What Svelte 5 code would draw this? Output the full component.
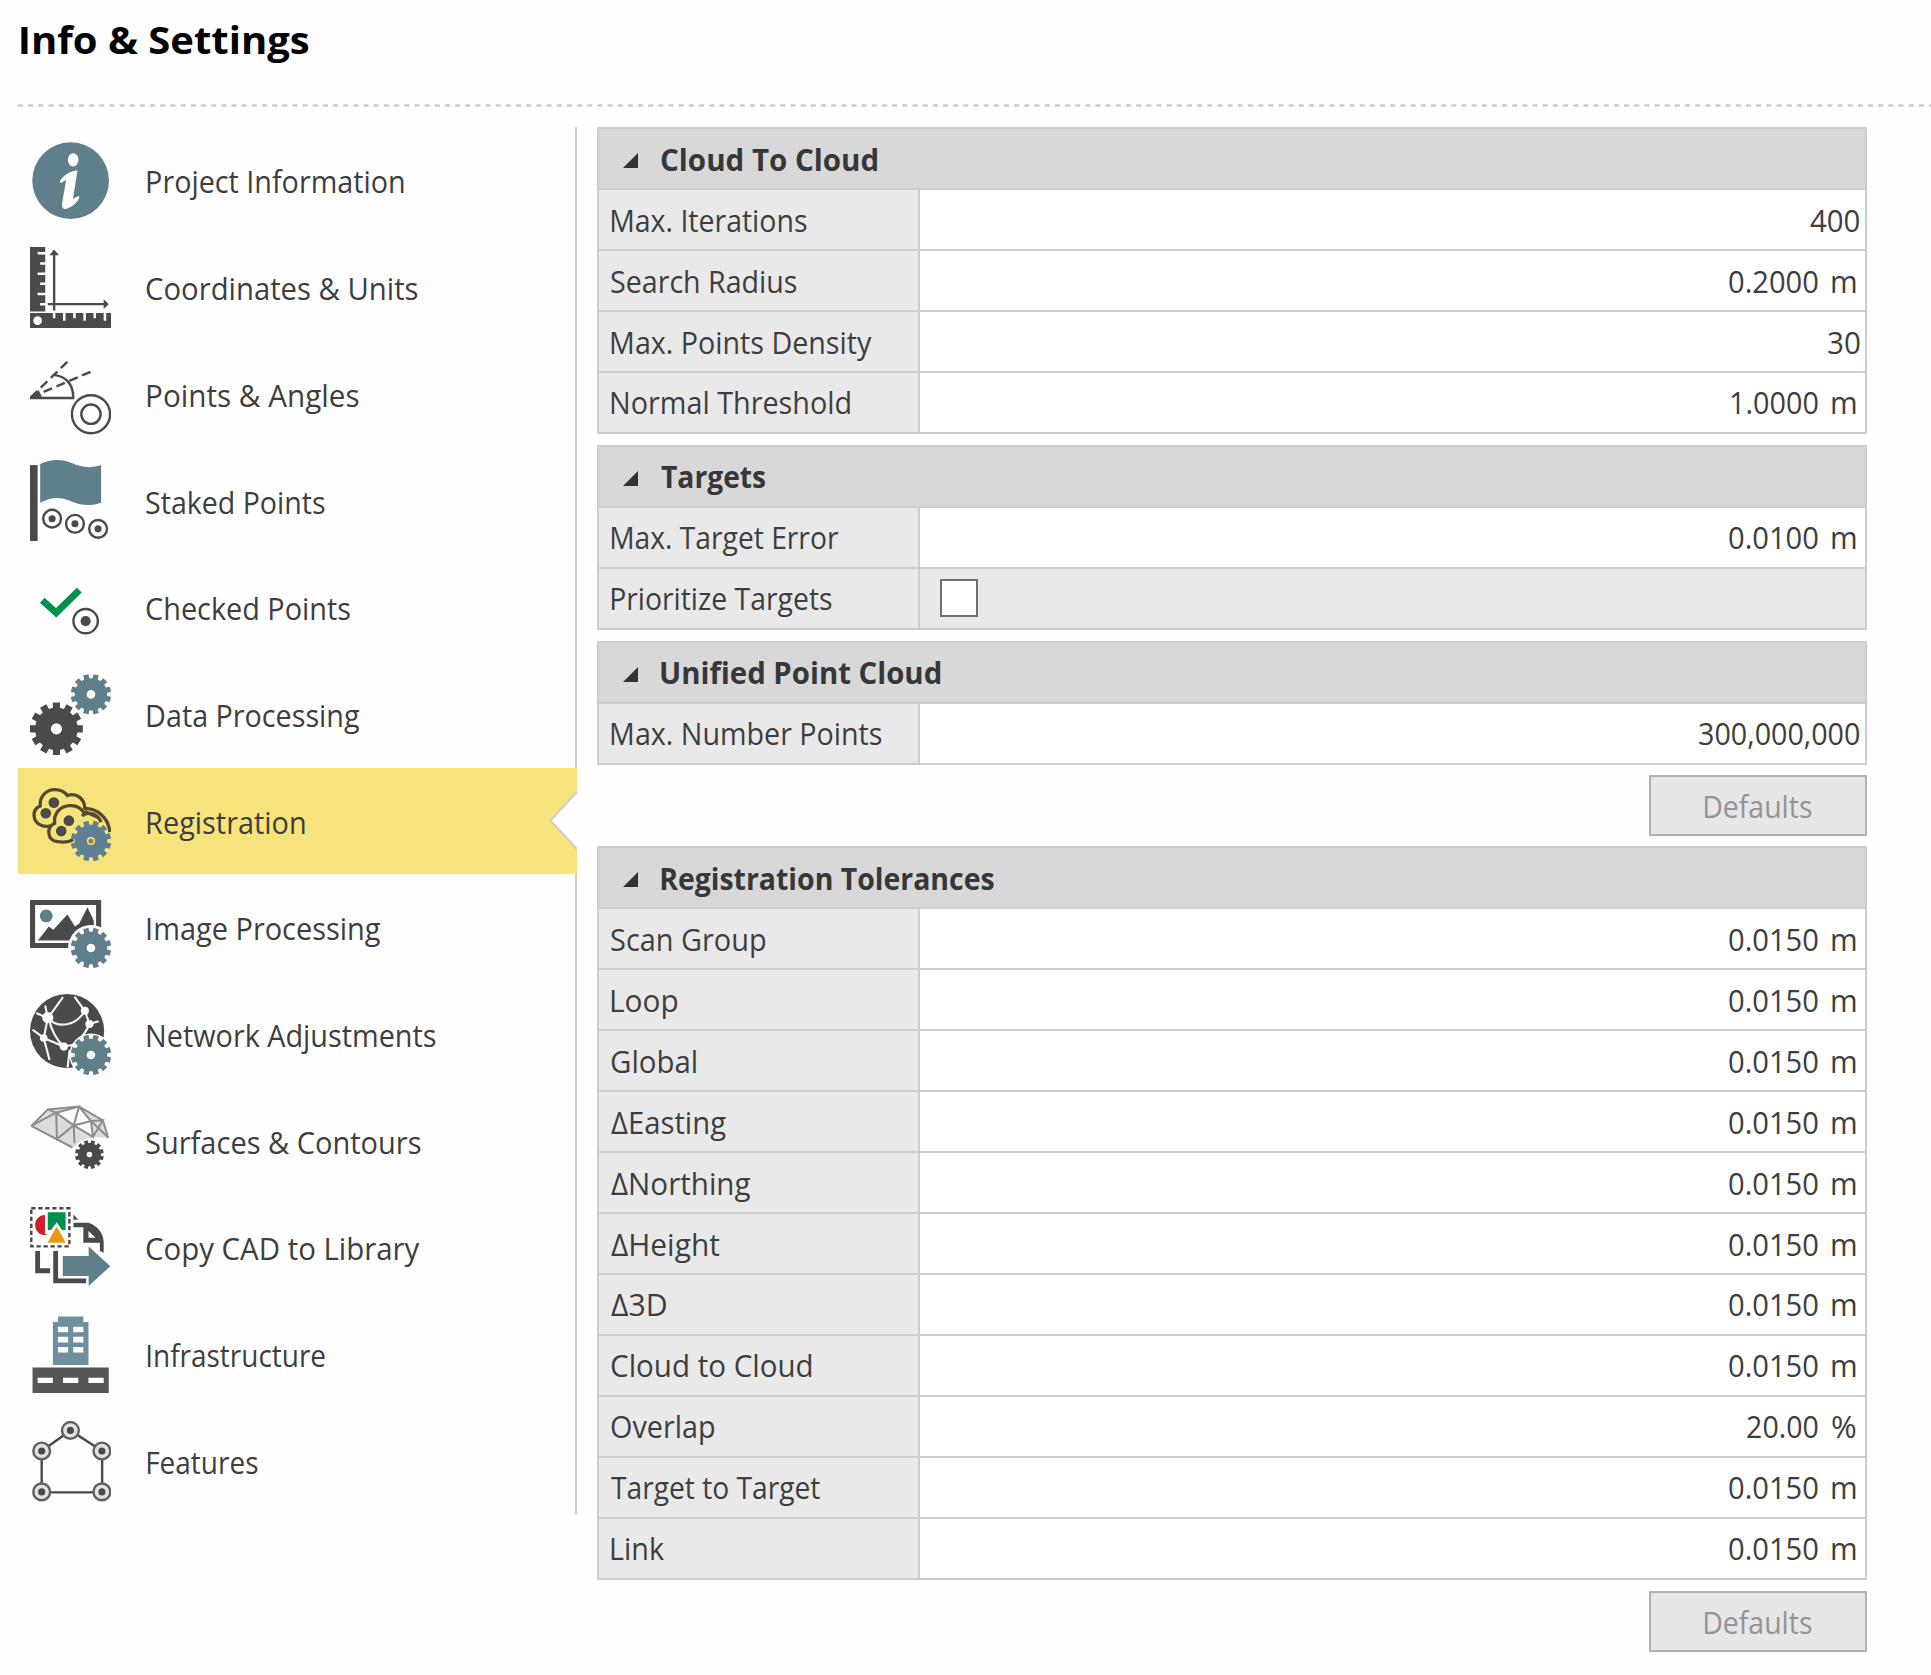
<script>
  const menu = [
    { id: 'info', label: 'Project Information', width: 257 },
    { id: 'units', label: 'Coordinates & Units', width: 272, inset: -1 },
    { id: 'angles', label: 'Points & Angles', width: 212 },
    { id: 'staked', label: 'Staked Points', width: 179, inset: -1 },
    { id: 'checked', label: 'Checked Points', width: 204.5, inset: -1 },
    { id: 'data', label: 'Data Processing', width: 212 },
    { id: 'registration', label: 'Registration', width: 158, active: true },
    { id: 'image', label: 'Image Processing', width: 233 },
    { id: 'network', label: 'Network Adjustments', width: 289 },
    { id: 'surfaces', label: 'Surfaces & Contours', width: 275, inset: -1 },
    { id: 'cad', label: 'Copy CAD to Library', width: 274, inset: -1 },
    { id: 'infra', label: 'Infrastructure', width: 178 },
    { id: 'features', label: 'Features', width: 111 }
  ];

  const meters = (label, width, value = '0.0150') => ({ label, width, value, unit: 'm', valueWidth: 88.5 });

  const groups = [
    {
      title: 'Cloud To Cloud',
      width: 216,
      rows: [
        { label: 'Max. Iterations', width: 196, value: '400', valueWidth: 49 },
        meters('Search Radius', 186, '0.2000'),
        { label: 'Max. Points Density', width: 261, value: '30', valueWidth: 31.5 },
        { ...meters('Normal Threshold', 239.5, '1.0000'), valueWidth: 86.5 }
      ]
    },
    {
      title: 'Targets',
      width: 104,
      rows: [
        meters('Max. Target Error', 227, '0.0100'),
        { label: 'Prioritize Targets', width: 221, checkbox: true }
      ]
    },
    {
      title: 'Unified Point Cloud',
      width: 279,
      rows: [{ label: 'Max. Number Points', width: 271, value: '300,000,000', valueWidth: 160 }],
      defaults: true
    },
    {
      title: 'Registration Tolerances',
      width: 332.5,
      rows: [
        meters('Scan Group', 154),
        meters('Loop', 66),
        meters('Global', 85.5),
        meters('ΔEasting', 114.5),
        meters('ΔNorthing', 139),
        meters('ΔHeight', 109),
        meters('Δ3D', 55.5),
        meters('Cloud to Cloud', 201),
        { label: 'Overlap', width: 103, value: '20.00', unit: '%', valueWidth: 70.5 },
        meters('Target to Target', 209.5),
        meters('Link', 53)
      ],
      defaults: true
    }
  ];

  const context = document.createElement('canvas').getContext('2d');

  // Condenses a text so that its visible strokes span exactly `width` pixels.
  function fit(node, width) {
    const css = getComputedStyle(node);
    context.font = `${css.fontWeight} ${css.fontSize} ${css.fontFamily}`;
    const box = context.measureText(node.textContent);
    const scale = width / (box.actualBoundingBoxLeft + box.actualBoundingBoxRight);
    node.style.width = `${width}px`;
    node.style.transform = `translateX(${box.actualBoundingBoxLeft * scale}px) scaleX(${scale})`;
  }

  // Outline of a twelve-toothed gear with a round hole.
  function gear(cx, cy, r, hole, turn = 0) {
    const points = [];
    for (let i = 0; i < 12; i++) {
      const mid = ((i * 30 + turn) * Math.PI) / 180;
      for (const [offset, radius] of [[-0.165, 0.8], [-0.135, 1], [0.135, 1], [0.165, 0.8]]) {
        const a = mid + offset;
        points.push(`${(cx + Math.sin(a) * r * radius).toFixed(2)} ${(cy - Math.cos(a) * r * radius).toFixed(2)}`);
      }
    }
    return `M${points.join('L')}Z M${cx - hole} ${cy}a${hole} ${hole} 0 1 0 ${2 * hole} 0a${hole} ${hole} 0 1 0 ${-2 * hole} 0Z`;
  }
</script>

{#snippet target(cx, cy, r, dot)}
  <circle class="line" {cx} {cy} {r} />
  <circle class="dark" {cx} {cy} r={dot} />
{/snippet}

{#snippet icon(id)}
  <svg class="icon" viewBox="0 0 32 32" aria-hidden="true">
    {#if id === 'info'}
      <circle class="steel" cx="16" cy="16" r="15.1" />
      <ellipse class="white" cx="17" cy="7.8" rx="2.1" ry="2.6" />
      <path class="white" d="M18.7 11.9C15.8 12.2 13.2 13.7 11.7 16.3L12.2 16.9L14.2 15.7L12.6 25.2C12.4 27 13.5 27.5 14.9 26.9C16.9 26 18.6 24.6 19.5 22.6L19 22L16.9 23.2Z" />
    {:else if id === 'units'}
      <path class="dark" d="M0 0H6V2H3V3H6V6H4V7H6V10H3V11H6V14H4V15H6V18H3V19H6V22H4V23H6V25.4H0Z" />
      <path class="dark" fill-rule="evenodd" d="M0 26H9V28H10V26H13V29H14V26H17V28H18V26H21V29H22V26H25V28H26V26H29V29H30V26H32V32H0Z M1.3 29a1.7 1.7 0 1 0 3.4 0a1.7 1.7 0 1 0 -3.4 0Z" />
      <path class="line" d="M9.5 2.5V25M7 22.5H30" />
      <path class="dark" d="M9.5 1L11.4 3.2H7.6ZM31 22.5L29 20.6V24.4Z" />
    {:else if id === 'angles'}
      <path class="line" d="M0 17.7H17C17.1 15 16.4 12.8 14.7 11C13.2 9.4 11.4 8.9 9.4 8.6" />
      <path class="line" stroke-dasharray="3.6 1.9" d="M0.3 17.5L16 2.2M0.3 17.5L24.8 7" />
      <path class="dark" d="M0 18.1L3.4 14.6L5 17.9Z" />
      <circle class="line" cx="24" cy="24.1" r="7.5" />
      <circle class="line" cx="24" cy="24.1" r="3.8" />
    {:else if id === 'staked'}
      <path class="dark" d="M0 2H3V32H0Z" />
      <path class="steel" d="M4 1.6C8 -.4 12.5 -.5 16.4 1.2C20 2.9 23.8 3.4 28 2V16.8C24 18.1 20.5 18 16.8 16.5C12.5 14.5 8.7 14.2 4 16.8Z" />
      {@render target(8.7, 23.1, 3.5, 1.4)}
      {@render target(17.7, 25.1, 3.5, 1.4)}
      {@render target(26.8, 27.1, 3.5, 1.4)}
    {:else if id === 'checked'}
      <path class="check" d="M4.8 13.1L10.3 18L19.4 9.1" />
      {@render target(21.9, 21.3, 4.8, 2)}
    {:else if id === 'data'}
      <path class="steel" fill-rule="evenodd" d={gear(24, 8, 8, 1.7, 15)} />
      <path class="dark" fill-rule="evenodd" d={gear(10.4, 21.6, 10.5, 2.2)} />
    {:else if id === 'registration'}
      <path class="outline" d="M8 18C4.8 19 1.7 17 1.6 14C1.5 11.8 2.8 10.7 4 10.2C3.8 6.5 6.3 3.8 9.7 3.8C12 3.8 13.7 4.7 14.7 6.1C18.3 4.9 21.5 7.3 21.6 11.2C26.5 11.2 31 15 31.4 20.5" />
      <path class="outline" d="M17 23.5C15 24.7 12.7 24.6 10.8 24.3C6.8 23.8 6.2 18.7 9.7 17C9.3 13 12 10.2 15.7 10.1C18.3 10 20.5 11.3 21.5 13.5C24 12.4 26.7 13.8 28 16.5" />
      <path class="outline" d="M20.5 14.2L22 12.6L26.5 14.6" />
      <circle class="dark" cx="9.4" cy="8.9" r="2.1" />
      <circle class="dark" cx="6.2" cy="13.1" r="2.1" />
      <circle class="dark" cx="15.3" cy="16" r="2.1" />
      <circle class="dark" cx="12.3" cy="20.1" r="2.1" />
      <path class="blue" fill-rule="evenodd" d={gear(24, 24, 8, 1.6, 15)} />
      <circle class="olive" cx="24" cy="24" r="1" />
    {:else if id === 'image'}
      <path class="dark" fill-rule="evenodd" d="M0 5.1H28V24H0ZM2 7.1V22H26V7.1Z" />
      <path class="dark" d="M3.1 21.1L7.4 15.5L9.2 16.8L14.7 10.8L17.7 15.5L19.4 14.4L22.6 8L25.1 13.2V21.1Z" />
      <circle class="steel" cx="6.4" cy="11.4" r="2.5" />
      <circle class="white" cx="24" cy="24" r="9" />
      <path class="steel" fill-rule="evenodd" d={gear(24, 24, 8, 1.7, 15)} />
    {:else if id === 'network'}
      <circle class="dark" cx="14.6" cy="14.6" r="14.6" />
      <path class="web" d="M7 9.5L13 1.2M7 9.5L6 4.5M7 9.5L2.5 7.5M7 9.5C11 13.6 18 12.8 21.6 6.6M7 9.5L5.4 17.3M7.5 10C8.5 14.5 10.5 18 13.3 20.7M21.6 6.6L17.5 1M21.6 6.6L23.4 11.8M23.4 11.8L27 10.7M23.4 11.8C22.5 14 21 16.5 18.6 18.6M5.4 17.3L1 14M5.4 17.3L13.3 20.7L17 20M5.4 17.3L7.7 26M13.3 20.7M15.6 22L14.8 29" />
      <circle class="white" cx="7" cy="9.3" r="2.2" />
      <circle class="white" cx="21.6" cy="6.6" r="1.6" />
      <circle class="white" cx="23.4" cy="11.8" r="1.6" />
      <circle class="white" cx="13.3" cy="20.7" r="1.6" />
      <circle class="white" cx="5.4" cy="17.3" r="1.5" />
      <circle class="white" cx="24" cy="24" r="8.5" />
      <path class="steel" fill-rule="evenodd" d={gear(24, 24, 8, 1.7, 15)} />
    {:else if id === 'surfaces'}
      <path class="mesh" d="M0.5 10.2L7 3.7L19.3 2.6L28.7 8L30.8 15L25 14.6L16.7 18.7L10.4 15.4Z" />
      <path class="facet" d="M11 5.2L19 2.9L17.2 10ZM19.3 3L23.5 8L17.2 10ZM17.2 10L24.4 8.4L24.6 14Z" />
      <path class="edge" d="M0.5 10.2L7 3.7L19.3 2.6L28.7 8L30.8 15M0.5 10.2L16.7 18.7M0.5 10.2L10.3 5L10.6 15.4L17.2 10L10.3 5L19.3 2.6L17.2 10L17.5 17M17.2 10L24 8.3L19.3 2.6M17.2 10L24.8 14.5L24 8.3L30.5 14.5M24.8 14.5L28.7 8L24 8.3M7 3.7L10.3 5" />
      <circle class="white" cx="23.4" cy="21.5" r="6.3" />
      <path class="dark" fill-rule="evenodd" d={gear(23.4, 21.5, 5.7, 1.1, 15)} />
    {:else if id === 'cad'}
      <rect class="line" x="0.5" y="0.5" width="15" height="15" stroke-dasharray="1.7 1.05" />
      <path class="red" d="M5.9 3.1V10.5L7 10.7C4.5 11.8 2 9.8 2 7.1C2 4.8 3.6 3.2 5.9 3.1Z" />
      <path class="green" d="M7 2.1H14V9.1H12.6L10.5 6L8.3 9.1H7Z" />
      <path class="orange" d="M10.5 7.7L14.1 14.1H6.9Z" />
      <path class="thick" d="M3 17.3V25.1H7.9M10.1 17.3V29.1H22.1" />
      <path class="dark" d="M17.1 3L19 5H17.1ZM17.1 6.2H23C26.5 7.4 28.9 10.3 29 13.7V18L27.5 17.3V14.1H21V8H17.1ZM23 9.4V12.1H25.8Z" fill-rule="evenodd" />
      <path class="steel" d="M12.9 19.3H23.1V15.5L31.6 23.3L23.1 31.1V27.2H12.9Z" />
    {:else if id === 'infra'}
      <path class="building" fill-rule="evenodd" d="M11 1H21V3.1H23V20.1H9V3.1H11ZM11 5V7.2H15V5ZM17 5V7.2H21V5ZM11 9V11.2H15V9ZM17 9V11.2H21V9ZM11 13V15.2H15V13ZM17 13V15.2H21V13Z" />
      <path class="road" fill-rule="evenodd" d="M1 21.1H31V31.1H1ZM3 25.1V27.2H9V25.1ZM13 25.1V27.2H19V25.1ZM23 25.1V27.2H29V25.1Z" />
    {:else}
      <path class="line" d="M4.6 12.2L15.9 4.1L28.4 12.2V28.5H4.6Z" />
      {#each [[15.9, 4.1], [4.6, 12.2], [28.3, 12.2], [4.6, 28.3], [28.3, 28.3]] as [cx, cy]}
        <circle class="node" {cx} {cy} r="3.3" />
        <circle class="dark" {cx} {cy} r="1.4" />
      {/each}
    {/if}
  </svg>
{/snippet}

<main>
  <h1><span class="fit" use:fit={288}>Info &amp; Settings</span></h1>
  <svg class="rule" aria-hidden="true"><line x1="0" y1="1.5" x2="100%" y2="1.5" /></svg>

  <div class="body">
    <nav>
      {#each menu as item}
        <a class:active={item.active} href="#{item.id}">
          {@render icon(item.id)}
          <span class="fit" style:margin-left="{item.inset ?? 0}px" use:fit={item.width}>{item.label}</span>
          {#if item.active}
            <svg class="notch" viewBox="0 0 28 58" aria-hidden="true"><path d="M28 0L1.5 28.5L28 57" /></svg>
          {/if}
        </a>
      {/each}
    </nav>

    <div class="panels">
      {#each groups as group}
        <section>
          <h2>
            <svg class="arrow" viewBox="0 0 15 15" aria-hidden="true"><path d="M15 0V15H0Z" /></svg>
            <span class="fit" use:fit={group.width}>{group.title}</span>
          </h2>
          {#each group.rows as row}
            <div class="row">
              <div class="label"><span class="fit" use:fit={row.width}>{row.label}</span></div>
              {#if row.checkbox}
                <div class="value toggle"><input type="checkbox" aria-label={row.label} /></div>
              {:else}
                <div class="value">
                  <span class="fit" use:fit={row.valueWidth}>{row.value}</span>
                  {#if row.unit}<span class="fit unit" use:fit={23.5}>{row.unit}</span>{/if}
                </div>
              {/if}
            </div>
          {/each}
        </section>
        {#if group.defaults}
          <button disabled><span class="fit" use:fit={108}>Defaults</span></button>
        {/if}
      {/each}
    </div>
  </div>
</main>

<style>
  :global(body) {
    background: #fefefe;
  }
  main {
    box-sizing: border-box;
    width: 1931px;
    height: 1675px;
    padding-left: 18px;
    overflow: hidden;
    color: #3e3e40;
    font: 30.5px/1.36 'Open Sans', 'Noto Sans', sans-serif;
  }
  .fit {
    display: block;
    flex: none;
    white-space: pre;
    transform-origin: 0 50%;
  }
  h1 {
    display: flex;
    align-items: center;
    height: 78px;
    margin: 0;
    padding-left: 2.5px;
    color: #000;
    font-size: 37.5px;
    font-weight: 700;
  }
  .rule {
    display: block;
    width: 100%;
    height: 3px;
    margin: 26px 0 20.3px;
  }
  .rule line {
    stroke: #cbcbcb;
    stroke-width: 2.6;
    stroke-dasharray: 5 5.165;
  }
  .body {
    display: flex;
    align-items: flex-start;
    gap: 20.5px;
  }
  nav {
    box-sizing: border-box;
    width: 558.5px;
    background: linear-gradient(#cdcdcd, #cdcdcd) right / 2px 100% no-repeat;
  }
  nav a {
    position: relative;
    display: flex;
    align-items: center;
    height: 106.71px;
    padding-left: 12px;
    gap: 35.5px;
    color: inherit;
    text-decoration: none;
  }
  nav a .fit {
    padding-top: 3px;
  }
  .active {
    background: #f6e37c;
  }
  .icon {
    flex: none;
    width: 81.3px;
    height: 81.3px;
  }
  .notch {
    position: absolute;
    right: 0;
    top: 24.5px;
    width: 28px;
    height: 58px;
    fill: #fefefe;
    stroke: #cdcdcd;
    stroke-width: 2;
  }
  .panels {
    display: flex;
    flex-direction: column;
    gap: 10.16px;
    width: 1270px;
  }
  section {
    margin-bottom: 0.54px;
    border: solid #cdcdcd;
    border-width: 0 2px 2px;
  }
  h2,
  .row {
    box-sizing: border-box;
    display: flex;
    height: 60.99px;
    margin: 0;
    border-top: 2px solid #cdcdcd;
  }
  h2 {
    align-items: center;
    gap: 23.5px;
    padding-left: 23.5px;
    background: #d8d8d8;
    color: #373739;
    font-size: 30.5px;
    font-weight: 700;
  }
  h2 .fit,
  .row .fit {
    padding-top: 1px;
  }
  .arrow {
    width: 15px;
    height: 15px;
    margin-top: 4px;
    fill: #333;
  }
  .label {
    box-sizing: border-box;
    display: flex;
    align-items: center;
    width: 320.5px;
    padding-left: 12px;
    border-right: 2px solid #cdcdcd;
    background: #e9e9e9;
  }
  .value {
    flex: 1;
    display: flex;
    align-items: center;
    justify-content: flex-end;
    gap: 14.5px;
    padding-right: 6px;
    background: #fff;
  }
  .unit {
    margin-right: 3.5px;
  }
  .toggle {
    justify-content: flex-start;
    padding-left: 20.5px;
    background: #e9e9e9;
  }
  input {
    appearance: none;
    box-sizing: border-box;
    width: 38px;
    height: 38px;
    margin: 0;
    border: 2px solid #707070;
    background: #fff;
  }
  button {
    box-sizing: border-box;
    display: flex;
    align-items: center;
    align-self: flex-end;
    justify-content: center;
    width: 218.5px;
    height: 60.99px;
    padding: 3px 0 0 1px;
    border: 2px solid #b2b2b2;
    background: #e6e6e6;
    color: #949496;
    font: inherit;
  }
  .dark {
    fill: #4a4a4a;
  }
  .steel {
    fill: #5f7f8a;
  }
  .blue {
    fill: #5f7f92;
  }
  .olive {
    fill: #8c8250;
  }
  .white {
    fill: #fefefe;
  }
  .red {
    fill: #cf202b;
  }
  .green {
    fill: #00904a;
  }
  .orange {
    fill: #e69a0c;
  }
  .building {
    fill: #6e8f9b;
  }
  .road {
    fill: #565656;
  }
  .line {
    fill: none;
    stroke: #4a4a4a;
    stroke-width: 0.95;
  }
  .thick {
    fill: none;
    stroke: #4a4a4a;
    stroke-width: 1.9;
  }
  .outline {
    fill: none;
    stroke: #55492f;
    stroke-width: 1.3;
  }
  .check {
    fill: none;
    stroke: #00904a;
    stroke-width: 2.7;
  }
  .web {
    fill: none;
    stroke: #f2f2f2;
    stroke-width: 0.85;
  }
  .mesh {
    fill: #dcdcdc;
  }
  .facet {
    fill: #fafafa;
  }
  .edge {
    fill: none;
    stroke: #8e8e8e;
    stroke-width: 0.8;
  }
  .node {
    fill: #e2e2e2;
    stroke: #606060;
    stroke-width: 0.95;
  }
</style>
